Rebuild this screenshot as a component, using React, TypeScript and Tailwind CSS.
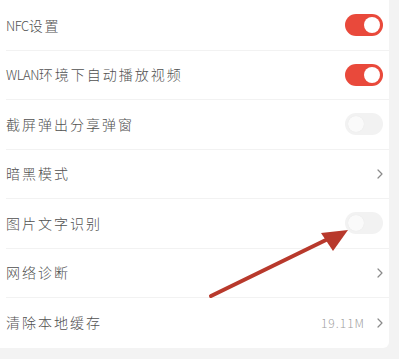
import React from "react";

type Row = {
  latin?: string;
  label: string;
  kind: "on" | "off" | "arrow";
  value?: string;
};

const rows: Row[] = [
  { latin: "NFC", label: "设置", kind: "on" },
  { latin: "WLAN", label: "环境下自动播放视频", kind: "on" },
  { label: "截屏弹出分享弹窗", kind: "off" },
  { label: "暗黑模式", kind: "arrow" },
  { label: "图片文字识别", kind: "off" },
  { label: "网络诊断", kind: "arrow" },
  { label: "清除本地缓存", kind: "arrow", value: "19.11M" },
];

const Toggle = ({ on }: { on: boolean }) => (
  <div
    className={
      on
        ? "flex h-[22px] w-[38px] items-center justify-end rounded-full bg-[#e9493b] px-[3px]"
        : "flex h-[22px] w-[38px] items-center justify-start rounded-full bg-[#f2f2f2] px-[3px]"
    }
  >
    <div
      className={
        on
          ? "h-[16px] w-[16px] rounded-full bg-white"
          : "h-[16px] w-[16px] rounded-full bg-[#fafafa] shadow-[0_0_1px_rgba(0,0,0,0.08)]"
      }
    />
  </div>
);

const Chevron = () => (
  <svg width="6" height="10" viewBox="0 0 6 10">
    <path d="M1 1 L5 5 L1 9" fill="none" stroke="#8a8a8a" strokeWidth="1.2" strokeLinecap="round" strokeLinejoin="round" />
  </svg>
);

const App = () => {
  return (
    <div
      className="relative h-[359px] w-[399px] overflow-hidden bg-[#f3f3f3]"
      style={{ fontFamily: '"Noto Sans CJK SC", "Noto Sans", sans-serif' }}
    >
      <div className="w-[389px] rounded-br-[6px] bg-white pt-[1px] pl-[6px]">
        {rows.map((row, i) => (
          <div
            key={row.label}
            className={
              i < rows.length - 1
                ? "flex h-[49.5px] items-center justify-between border-b border-[#f2f2f2] pr-[6px]"
                : "flex h-[49.5px] items-center justify-between pr-[6px]"
            }
          >
            <span className="text-[14px] font-light text-[#505050]">
              {row.latin && <span className="text-[13px] tracking-[-0.5px]">{row.latin}</span>}
              <span className="tracking-[2px]">{row.label}</span>
            </span>
            {row.kind === "arrow" ? (
              <div className="flex items-center gap-[12px]">
                {row.value && (
                  <span className="text-[12px] font-light tracking-[1px] text-[#a0a0a0]">{row.value}</span>
                )}
                <Chevron />
              </div>
            ) : (
              <Toggle on={row.kind === "on"} />
            )}
          </div>
        ))}
      </div>

      {/* annotation arrow */}
      <svg className="pointer-events-none absolute left-0 top-0" width="399" height="359">
        <line x1="211" y1="296" x2="330" y2="238" stroke="#b8392c" strokeWidth="4" strokeLinecap="round" />
        <polygon points="348,230 321,233 333,251" fill="#b8392c" />
      </svg>
    </div>
  );
};

export default App;
